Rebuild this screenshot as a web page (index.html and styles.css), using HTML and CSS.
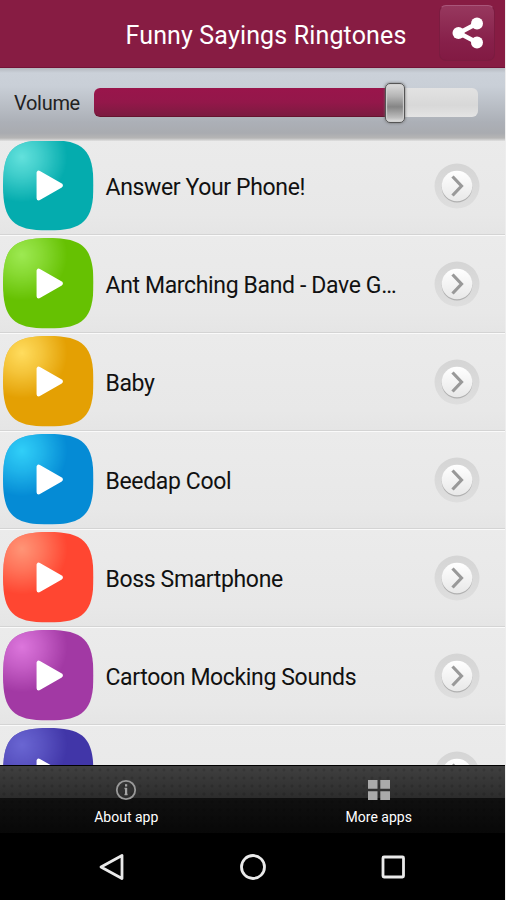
FILE: index.html
```html
<!DOCTYPE html>
<html lang="en">
<head>
<meta charset="utf-8">
<title>Funny Sayings Ringtones</title>
<link rel="stylesheet" href="styles.css">
</head>
<body>
<svg class="defs" aria-hidden="true">
  <defs>
    <radialGradient id="shine" gradientUnits="userSpaceOnUse" cx="19" cy="17" r="46">
      <stop offset="0" stop-color="#fff" stop-opacity="1"/>
      <stop offset=".45" stop-color="#fff" stop-opacity=".6"/>
      <stop offset="1" stop-color="#fff" stop-opacity="0"/>
    </radialGradient>
    <mask id="glow"><rect width="91" height="91" fill="url(#shine)"/></mask>
    <linearGradient id="ring" x1="0" y1="0" x2="0" y2="1"><stop offset="0" stop-color="#d5d5d5"/><stop offset="1" stop-color="#dedede"/></linearGradient>
    <linearGradient id="knob" x1="0" y1="0" x2="0" y2="1"><stop offset="0" stop-color="#fff"/><stop offset="1" stop-color="#e8e8e8"/></linearGradient>
    <symbol id="play" viewBox="0 0 91 91">
      <path class="base" d="M0 45.5C0 10 10 0 45.5 0S91 10 91 45.5 81 91 45.5 91 0 81 0 45.5Z"/>
      <path class="light" mask="url(#glow)" d="M0 45.5C0 10 10 0 45.5 0S91 10 91 45.5 81 91 45.5 91 0 81 0 45.5Z"/>
      <path d="M36 33V58.500L58 45.700Z" fill="#fff" stroke="#fff" stroke-width="4.500" stroke-linejoin="round"/>
    </symbol>
    <symbol id="next" viewBox="0 0 46 46">
      <circle cx="23" cy="23" r="22.500" fill="url(#ring)"/>
      <circle cx="23" cy="24.300" r="15.300" fill="#b0b0b0"/>
      <circle cx="23" cy="23" r="15.300" fill="url(#knob)"/>
      <path d="M18.500 13.500L27.500 23L18.500 32.500" fill="none" stroke="#999" stroke-width="3.200"/>
    </symbol>
  </defs>
</svg>
<div class="app">
  <header class="header">
    <h1>Funny Sayings Ringtones</h1>
    <button class="share" aria-label="Share">
      <svg width="32" height="32" viewBox="0 0 32 32"><path d="M25 6.500L7 16L25 25.500" fill="none" stroke="#fff" stroke-width="4.500"/><g fill="#fff"><circle cx="25" cy="6.500" r="6"/><circle cx="6.500" cy="16" r="6"/><circle cx="25" cy="25.500" r="6"/></g></svg>
    </button>
  </header>
  <section class="volume">
    <span class="volume-label">Volume</span>
    <div class="track"><div class="fill"></div><div class="thumb"></div></div>
  </section>
  <main class="list">
    <div class="row"><svg class="play teal"><use href="#play"/></svg><span class="name">Answer Your Phone!</span><svg class="next"><use href="#next"/></svg></div>
    <div class="row"><svg class="play green"><use href="#play"/></svg><span class="name">Ant Marching Band - Dave G…</span><svg class="next"><use href="#next"/></svg></div>
    <div class="row"><svg class="play amber"><use href="#play"/></svg><span class="name">Baby</span><svg class="next"><use href="#next"/></svg></div>
    <div class="row"><svg class="play blue"><use href="#play"/></svg><span class="name">Beedap Cool</span><svg class="next"><use href="#next"/></svg></div>
    <div class="row"><svg class="play red"><use href="#play"/></svg><span class="name">Boss Smartphone</span><svg class="next"><use href="#next"/></svg></div>
    <div class="row"><svg class="play purple"><use href="#play"/></svg><span class="name">Cartoon Mocking Sounds</span><svg class="next"><use href="#next"/></svg></div>
    <div class="row"><svg class="play indigo"><use href="#play"/></svg><span class="name"></span><svg class="next"><use href="#next"/></svg></div>
  </main>
  <footer class="tabs">
    <div class="tab">
      <svg width="22" height="22" viewBox="0 0 22 22"><circle cx="11" cy="11" r="9.200" fill="none" stroke="#999" stroke-width="1.800"/><path d="M9.500 9.500H11V15.500M9.500 15.500H12.500" fill="none" stroke="#a4a4a4" stroke-width="1.500"/><rect x="10" y="9" width="2.200" height="7" fill="#a4a4a4"/><rect x="10" y="5.200" width="2.200" height="2.300" fill="#a4a4a4"/></svg>
      <span>About app</span>
    </div>
    <div class="tab">
      <svg width="22" height="22" viewBox="0 0 22 22"><path d="M0 1H9.500V9.700H0ZM12.300 1H22V9.700H12.300ZM0 12.300H9.500V21H0ZM12.300 12.300H22V21H12.300Z" fill="#aaa"/></svg>
      <span>More apps</span>
    </div>
  </footer>
  <nav class="nav">
    <svg width="28" height="28" viewBox="0 0 28 28"><path d="M24 2.500V25.500L3 14Z"/></svg>
    <svg width="28" height="28" viewBox="0 0 28 28"><circle cx="14" cy="14" r="11.500"/></svg>
    <svg width="28" height="28" viewBox="0 0 28 28"><rect x="4" y="4" width="20.500" height="20" rx="1"/></svg>
  </nav>
</div>
</body>
</html>
```
FILE: styles.css
```css
* { box-sizing: border-box; }
body { margin: 0; background: #eee; font-family: Roboto, "Liberation Sans", sans-serif; }
.defs { position: absolute; width: 0; height: 0; }
.app { width: 505px; height: 900px; display: flex; flex-direction: column; overflow: hidden; background: #000; }

.header { height: 68px; flex: none; display: flex; background: #871c43; border-bottom: 1px solid #741237; color: #fff; }
.header h1 { margin: 0 0 0 125.500px; width: 313.500px; font-size: 25px; font-weight: 400; line-height: 71px; letter-spacing: .15px; white-space: nowrap; }
.share { width: 56px; height: 56px; margin-top: 5px; padding: 0 0 0 2px; display: flex; align-items: center; justify-content: center; border: 1px solid #7b1c40; border-top-color: #a9567a; border-radius: 7px; background: linear-gradient(#97385e, #87204a 65%, #821a43); }

.volume { position: relative; z-index: 1; height: 73px; flex: none; display: flex; align-items: flex-start; background: linear-gradient(#b5b9c0, #cbd1d9 5px, #c9cfd7 18px, #acb0b7 54px, #a9abb0 65px, #b5b5b5 70px, #e1e1e1); }
.volume-label { width: 94px; padding-left: 14px; font-size: 20px; line-height: 71px; letter-spacing: -.3px; color: #222; }
.track { position: relative; width: 384px; height: 29px; margin-top: 20px; border-radius: 6px; background: linear-gradient(#e2e2e2, #d8d8d8 60%, #e4e4e4); }
.fill { width: 300px; height: 29px; border-radius: 6px 0 0 6px; background: linear-gradient(#99154b, #94174a 50%, #7c1b40); border-bottom: 1px solid #67142f; }
.thumb { position: absolute; left: 291px; top: -5px; width: 20px; height: 40px; border: 1px solid #555; border-radius: 5px; background: linear-gradient(#ddd, #b5b5b5 32%, #858585 60%, #bcbcbc 88%, #e2e2e2); box-shadow: inset 0 0 1px 1px #d0d0d0, 0 0 3px #666; }

.list { flex: 1; min-height: 0; margin-top: -4px; overflow: hidden; }
.row { height: 98px; display: flex; align-items: center; padding: 0 0 1px 3px; background: linear-gradient(#ebebeb, #e8e8e8 80%, #e5e5e5); border-top: 1px solid #fafafa; border-bottom: 1px solid #d4d4d4; }
.play { width: 90.500px; height: 90.500px; flex: none; }
.next { width: 46px; height: 46px; flex: none; margin-top: 1px; }
.name { width: 340.500px; padding: 5px 0 0 12px; font-size: 23px; line-height: 30px; letter-spacing: -.36px; color: #111; white-space: nowrap; }
.base { fill: var(--base); }
.light { fill: var(--light); }
.teal { --base: #04acae; --light: #63e1dc; }
.green { --base: #66c102; --light: #9de952; }
.amber { --base: #e4a003; --light: #ffdc5e; }
.blue { --base: #058bd5; --light: #31cff8; }
.red { --base: #ff4631; --light: #ff9577; }
.purple { --base: #a239a4; --light: #dc76dc; }
.indigo { --base: #4136a8; --light: #6a66d2; }

.tabs { height: 68px; flex: none; display: flex; border-top: 1px solid #000; background: radial-gradient(circle, #0002 1px, transparent 2px) 0 0 / 8px 8px, linear-gradient(#404040, #2c2c2c 48%, #101010 48%, #080808); }
.tab { flex: 1; display: flex; flex-direction: column; align-items: center; padding-top: 13px; color: #fff; font-size: 14px; line-height: 20px; }
.tab svg { margin-bottom: 6px; }
.nav { height: 67px; flex: none; display: flex; justify-content: space-between; align-items: center; padding: 0 98px; background: #000; }
.nav svg { fill: none; stroke: #eaeaea; stroke-width: 2.800; stroke-linejoin: round; }
```
